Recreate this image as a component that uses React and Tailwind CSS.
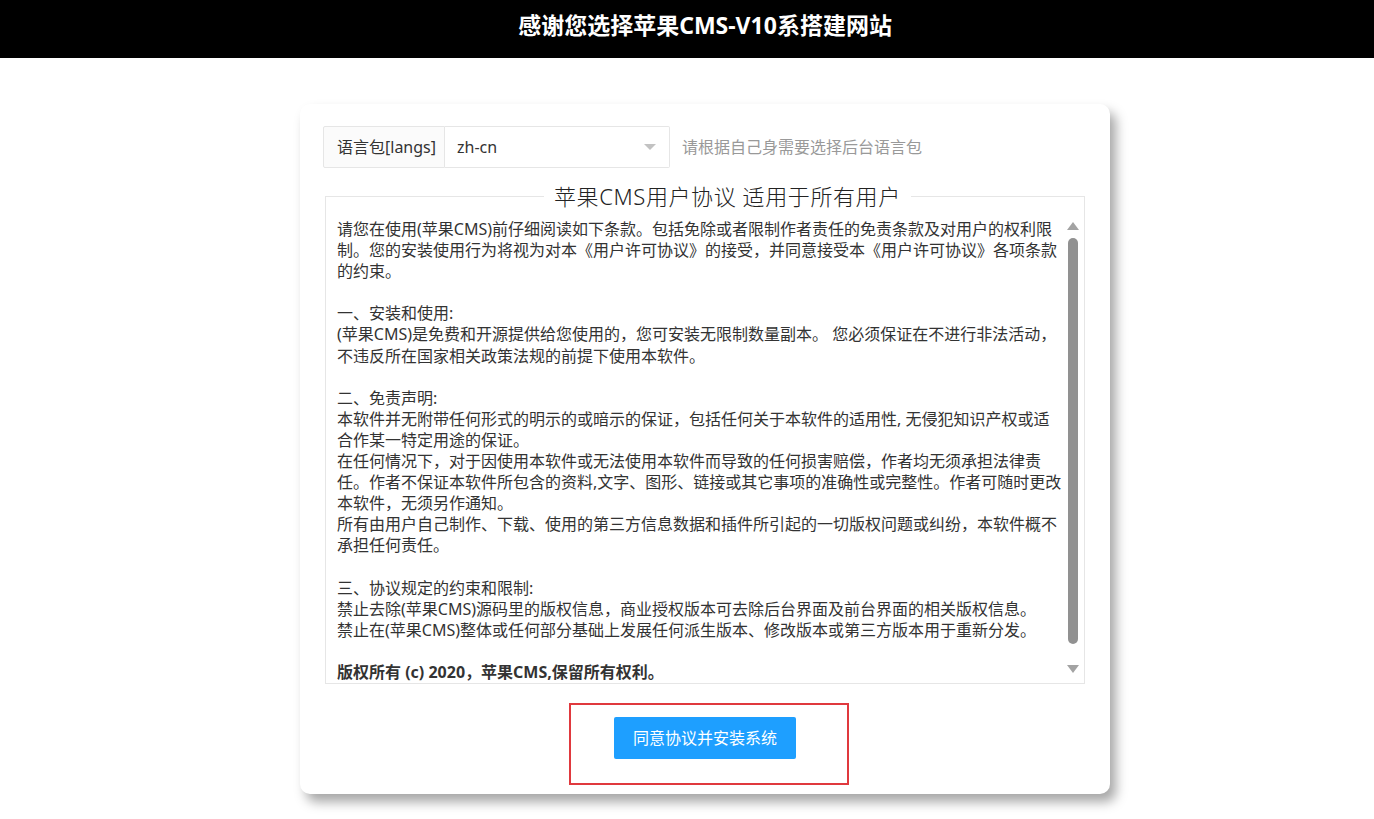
const lines = [
  "请您在使用(苹果CMS)前仔细阅读如下条款。包括免除或者限制作者责任的免责条款及对用户的权利限",
  "制。您的安装使用行为将视为对本《用户许可协议》的接受，并同意接受本《用户许可协议》各项条款",
  "的约束。",
  "",
  "一、安装和使用:",
  "(苹果CMS)是免费和开源提供给您使用的，您可安装无限制数量副本。 您必须保证在不进行非法活动，",
  "不违反所在国家相关政策法规的前提下使用本软件。",
  "",
  "二、免责声明:",
  "本软件并无附带任何形式的明示的或暗示的保证，包括任何关于本软件的适用性, 无侵犯知识产权或适",
  "合作某一特定用途的保证。",
  "在任何情况下，对于因使用本软件或无法使用本软件而导致的任何损害赔偿，作者均无须承担法律责",
  "任。作者不保证本软件所包含的资料,文字、图形、链接或其它事项的准确性或完整性。作者可随时更改",
  "本软件，无须另作通知。",
  "所有由用户自己制作、下载、使用的第三方信息数据和插件所引起的一切版权问题或纠纷，本软件概不",
  "承担任何责任。",
  "",
  "三、协议规定的约束和限制:",
  "禁止去除(苹果CMS)源码里的版权信息，商业授权版本可去除后台界面及前台界面的相关版权信息。",
  "禁止在(苹果CMS)整体或任何部分基础上发展任何派生版本、修改版本或第三方版本用于重新分发。",
  "",
];

const font = { fontFamily: '"Noto Sans", "Noto Sans CJK SC", sans-serif' };

export default function App() {
  return (
    <div className="min-h-screen bg-white text-[#333]" style={font}>
      <div className="h-[58px] bg-black flex justify-center pt-[10px] pl-[36px]">
        <h1 className="text-[23px] leading-[30px] font-bold text-white">
          感谢您选择苹果CMS-V10系搭建网站
        </h1>
      </div>

      <div className="ml-[300px] mt-[46px] w-[810px] h-[690px] bg-white rounded-[10px] shadow-[6px_8px_12px_rgba(0,0,0,0.35)] pt-[22px] px-[23px]">
        {/* language select */}
        <div className="flex items-center h-[42px]">
          <div className="h-full w-[122px] flex items-center px-[13px] bg-[#fbfbfb] border border-[#e6e6e6] rounded-l-[2px] text-[16px] whitespace-nowrap">
            语言包[langs]
          </div>
          <div className="h-full w-[225px] flex items-center justify-between pl-[12px] pr-[13px] border border-l-0 border-[#e6e6e6] rounded-r-[2px] text-[16px]">
            <span>zh-cn</span>
            <span className="w-0 h-0 border-x-[6px] border-x-transparent border-t-[6px] border-t-[#c2c2c2]" />
          </div>
          <div className="ml-[12px] text-[16px] text-[#999]">请根据自己身需要选择后台语言包</div>
        </div>

        {/* agreement */}
        <fieldset className="mt-[13px] mx-[2px] border border-[#e6e6e6] h-[503px]">
          <legend className="ml-[218px] px-[10px] text-[22px] leading-[30px] font-light tracking-[0.6px] text-[#222]">
            苹果CMS用户协议 适用于所有用户
          </legend>
          <div className="flex h-[468px] mt-[4px]">
            <div className="flex-1 overflow-hidden pl-[11px] pt-[4px] text-[16px] leading-[21.1px]">
              {lines.map((l, i) => (
                <div key={i} className="whitespace-nowrap h-[21.1px]">
                  {l}
                </div>
              ))}
              <div className="whitespace-nowrap font-bold">版权所有 (c) 2020，苹果CMS,保留所有权利。</div>
            </div>
            <div className="w-[18px] flex flex-col items-center pt-[7px] pb-[10px] mr-[2px]">
              <span className="w-0 h-0 border-x-[6px] border-x-transparent border-b-[8px] border-b-[#a3a3a3]" />
              <div className="mt-[8px] w-[10px] h-[406px] rounded-full bg-[#919191]" />
              <div className="flex-1" />
              <span className="w-0 h-0 border-x-[6px] border-x-transparent border-t-[8px] border-t-[#a3a3a3]" />
            </div>
          </div>
        </fieldset>

        {/* action */}
        <div className="flex justify-center mt-[19px] pl-[8px]">
          <div className="w-[280px] h-[82px] border-2 border-[#e0393e] flex justify-center pt-[12px] pr-[8px]">
            <button className="w-[182px] h-[42px] bg-[#1e9fff] text-white text-[16px] rounded-[2px]">
              同意协议并安装系统
            </button>
          </div>
        </div>
      </div>
    </div>
  );
}
